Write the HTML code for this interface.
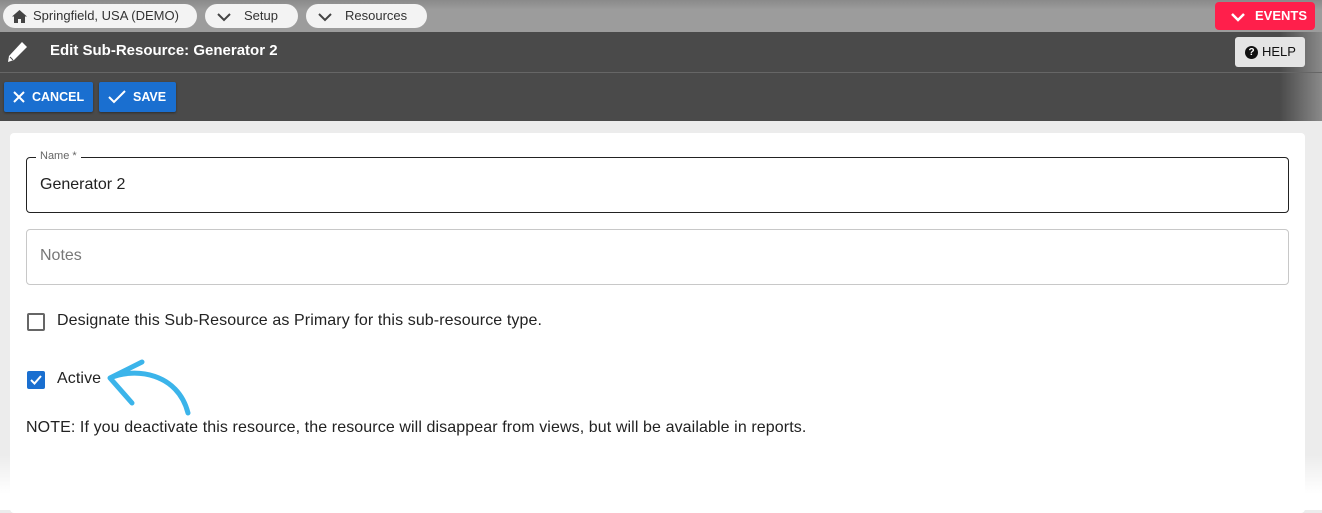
<!DOCTYPE html>
<html><head><style>
*{box-sizing:border-box;margin:0;padding:0}
body{width:1322px;height:510px;overflow:hidden;background:#ececec;font-family:"Liberation Sans",Arial,sans-serif;position:relative}
.top{position:absolute;left:0;top:0;width:1322px;height:32px;background:linear-gradient(#8a8a8a,#9c9c9c 30%,#9c9c9c)}
.pill{position:absolute;top:4px;height:24px;background:#f3f3f3;border-radius:12px;font-size:13px;color:#333;line-height:24px}
.dark{position:absolute;left:0;top:32px;width:1322px;height:89px;background:linear-gradient(90deg,#4a4a4a 1280px,#8a8a8a 1322px)}
.btn{position:absolute;top:82px;height:30px;background:#1a6fd0;color:#fff;font-weight:bold;font-size:12.5px;border-radius:2px;line-height:30px;box-shadow:0 1px 2px rgba(0,0,0,.4)}
.card{position:absolute;left:10px;top:133px;width:1295px;height:380px;background:#fff;border-radius:4px}
.field{position:absolute;left:26px;width:1263px;border-radius:4px;font-size:16px}
.txt{position:absolute;font-size:16px;color:#222;letter-spacing:0.1px}
.fade{position:absolute;left:0;top:455px;width:1322px;height:55px;background:linear-gradient(rgba(255,255,255,0),#fff 70%)}
</style></head><body>
<div class="top"></div>
<div class="pill" style="left:3px;width:194px"><svg style="position:absolute;left:9px;top:6px" width="15" height="13" viewBox="0 0 15 13"><path d="M7.5 0L0 6.5h2V13h4V9h3v4h4V6.5h2z" fill="#444"/></svg><span style="position:absolute;left:30px">Springfield, USA (DEMO)</span></div>
<div class="pill" style="left:205px;width:93px"><svg style="position:absolute;left:11px;top:8px" width="16" height="10"><path d="M2 2l6 6 6-6" stroke="#444" stroke-width="2" fill="none"/></svg><span style="position:absolute;left:39px">Setup</span></div>
<div class="pill" style="left:306px;width:121px"><svg style="position:absolute;left:11px;top:8px" width="16" height="10"><path d="M2 2l6 6 6-6" stroke="#444" stroke-width="2" fill="none"/></svg><span style="position:absolute;left:39px">Resources</span></div>
<div style="position:absolute;left:1215px;top:2px;width:100px;height:28px;background:#ff1f4b;border-radius:4px;color:#fff;font-weight:bold;font-size:13px;line-height:28px"><svg style="position:absolute;left:15px;top:10px" width="16" height="10"><path d="M2 2l6 6 6-6" stroke="#fff" stroke-width="2.5" fill="none"/></svg><span style="position:absolute;left:40px">EVENTS</span></div>
<div class="dark"></div>
<div style="position:absolute;left:0;top:72px;width:1322px;height:1px;background:#666"></div>
<svg style="position:absolute;left:5px;top:40px" width="26" height="24" viewBox="0 0 26 24"><path d="M17 2l5 5L9 20l-6 2 1-6z" fill="#fff"/><path d="M5 17l3 3" stroke="#4a4a4a" stroke-width="1"/></svg>
<div style="position:absolute;left:50px;top:42px;color:#fff;font-weight:bold;font-size:15px">Edit Sub-Resource: Generator 2</div>
<div style="position:absolute;left:1235px;top:37px;width:70px;height:30px;background:#e4e4e4;border-radius:3px;font-size:13px;line-height:30px;color:#111"><span style="position:absolute;left:10px;top:9px;width:13px;height:13px;border-radius:50%;background:#111;color:#fff;font-size:10px;line-height:13px;text-align:center;font-weight:bold">?</span><span style="position:absolute;left:27px">HELP</span></div>
<div class="btn" style="left:4px;width:89px"><svg style="position:absolute;left:9px;top:9px" width="12" height="12"><path d="M1 1l10 10M11 1L1 11" stroke="#fff" stroke-width="2"/></svg><span style="position:absolute;left:28px">CANCEL</span></div>
<div class="btn" style="left:99px;width:77px"><svg style="position:absolute;left:9px;top:8px" width="18" height="14"><path d="M1 7l5 5L17 1" stroke="#fff" stroke-width="2" fill="none"/></svg><span style="position:absolute;left:34px">SAVE</span></div>
<div class="card"></div>
<div class="field" style="top:157px;height:56px;border:1px solid #222"><span style="position:absolute;left:9px;top:-8px;background:#fff;padding:0 4px;font-size:11px;color:#666">Name *</span><span style="position:absolute;left:13px;top:18px;color:#222">Generator 2</span></div>
<div class="field" style="top:229px;height:56px;border:1px solid #c8c8c8"><span style="position:absolute;left:13px;top:17px;color:#777">Notes</span></div>
<div style="position:absolute;left:27px;top:313px;width:18px;height:18px;border:2px solid #666;border-radius:2px"></div>
<div class="txt" style="left:57px;top:312px">Designate this Sub-Resource as Primary for this sub-resource type.</div>
<div style="position:absolute;left:27px;top:371px;width:18px;height:18px;background:#1a6fd0;border-radius:2px"><svg width="18" height="18"><path d="M4 9l3.5 3.5L14 5" stroke="#fff" stroke-width="2" fill="none"/></svg></div>
<div class="txt" style="left:57px;top:370px">Active</div>
<svg style="position:absolute;left:100px;top:355px" width="100" height="65"><path d="M10 23C35 12 78 18 88 58M10 23L42 7M10 23L32 48" stroke="#3bb4ea" stroke-width="5" fill="none" stroke-linecap="round"/></svg>
<div class="txt" style="left:26px;top:419px">NOTE: If you deactivate this resource, the resource will disappear from views, but will be available in reports.</div>
<div class="fade"></div>
</body></html>
